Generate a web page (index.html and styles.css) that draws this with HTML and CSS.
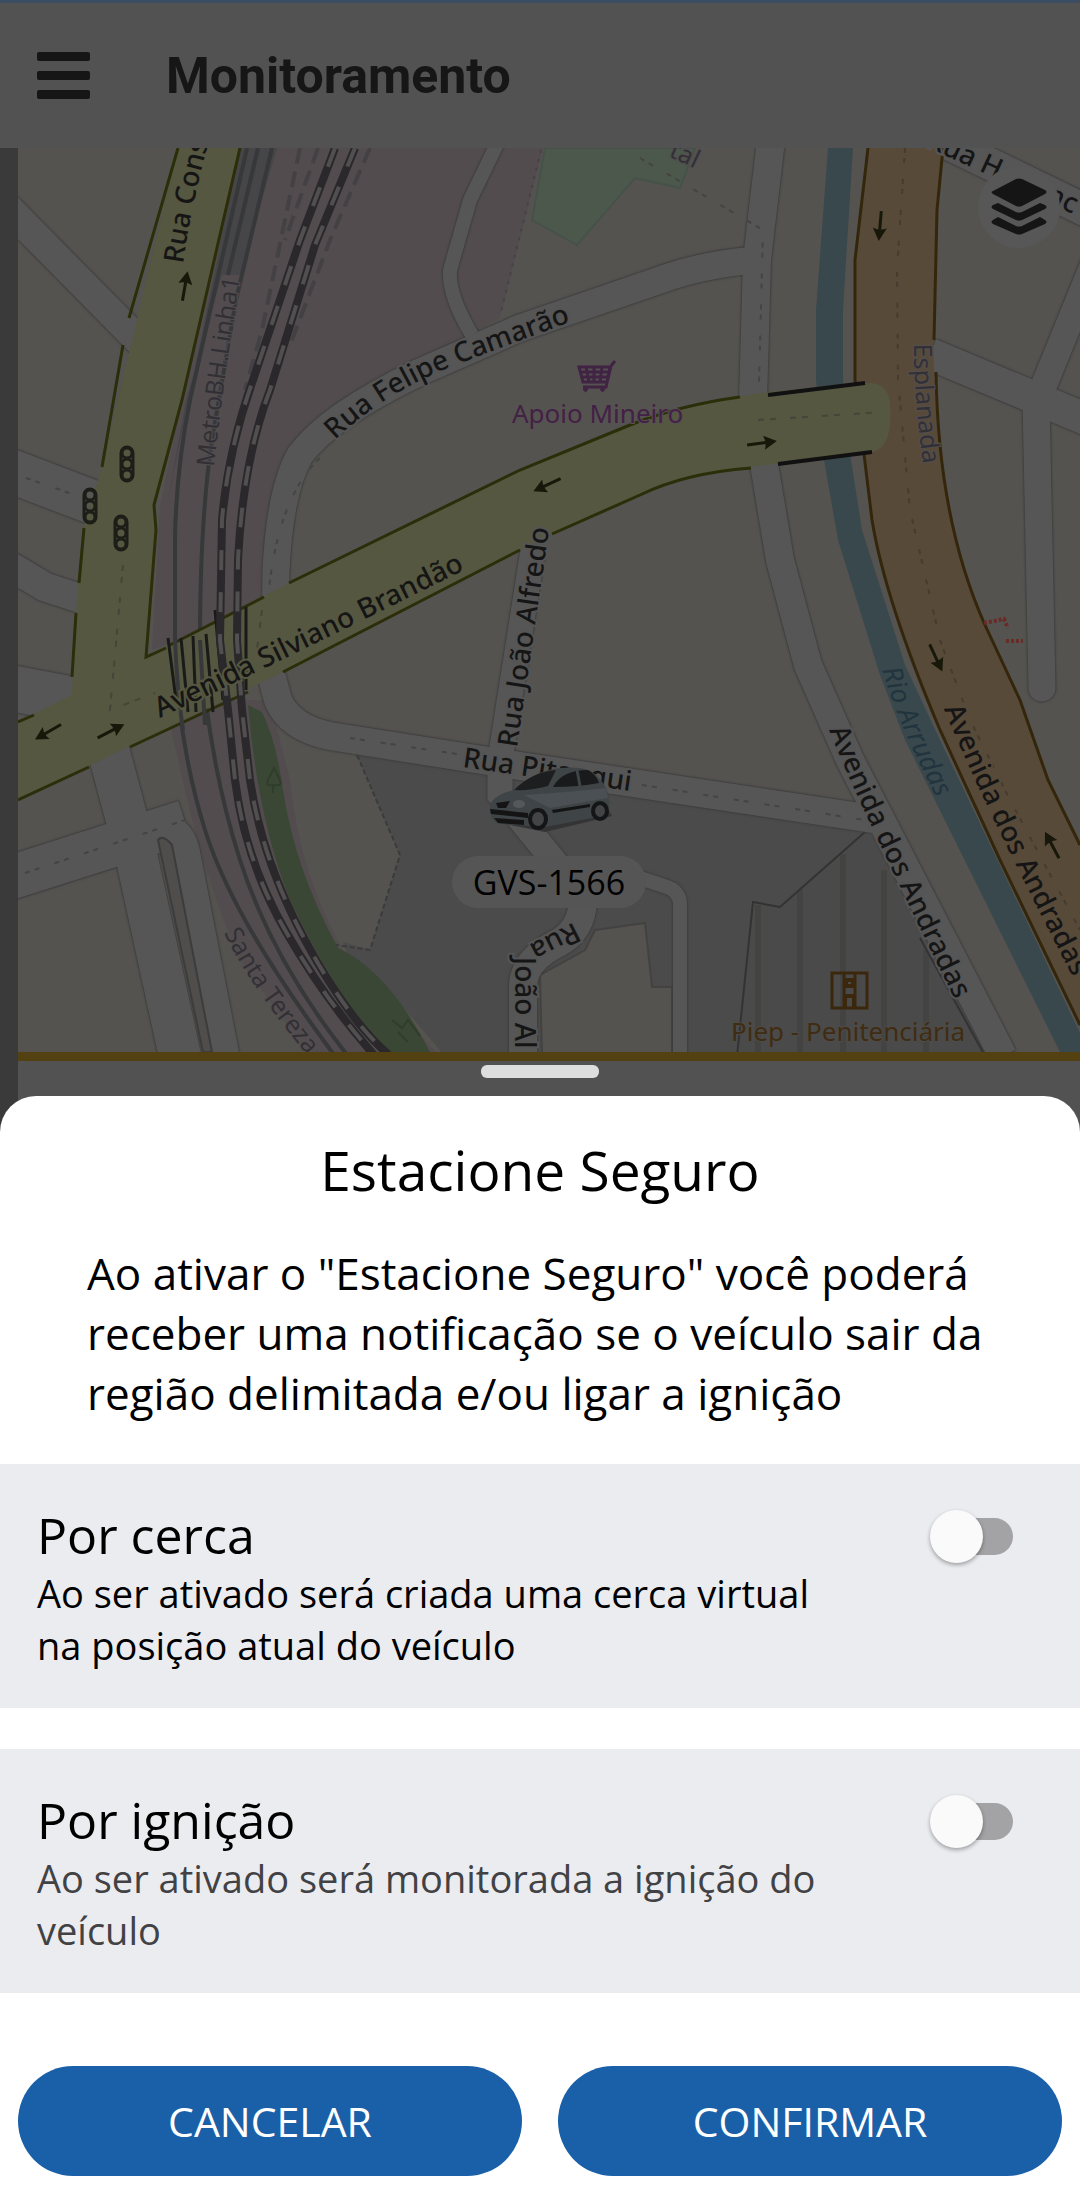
FILE: index.html
```html
<!DOCTYPE html>
<html lang="pt-BR">
<head>
<meta charset="utf-8">
<meta name="viewport" content="width=device-width, initial-scale=1">
<title>Monitoramento</title>
<link rel="stylesheet" href="styles.css">
</head>
<body>
<header class="topbar">
  <button class="menu-button" type="button" aria-label="Menu">
    <svg viewBox="0 0 53 47" width="53" height="47"><g fill="#161616"><rect width="53" height="9" rx="2"/><rect y="19" width="53" height="9" rx="2"/><rect y="38" width="53" height="9" rx="2"/></g></svg>
  </button>
  <h1 class="topbar-title">Monitoramento</h1>
</header>

<main class="map">
  <svg class="map-canvas" viewBox="18 148 1062 904" preserveAspectRatio="xMidYMid slice" role="img" aria-label="Mapa">
    <defs>
      <g id="arrow"><path d="M-15 0H4" stroke="#17180a" stroke-width="3"/><path d="M15 0L2 -7Q5 0 2 7Z" fill="#17180a"/></g>
      <g id="signal" fill="none" stroke="#1d1e17" stroke-width="3"><rect x="-6" y="-17" width="12" height="34" rx="6"/><circle r="5"/><circle cy="-11" r="5"/><circle cy="11" r="5"/></g>
      <path id="p-cons" d="M183 264Q192 200 212 130"/>
      <path id="p-metro" d="M214 467Q222 390 243 260"/>
      <path id="p-felipe" d="M335 440Q380 396 450 367Q510 344 590 315"/>
      <path id="p-silviano" d="M160 718Q280 662 480 562"/>
      <path id="p-joao" d="M517 748L552 510"/>
      <path id="p-pit" d="M462 767L650 794"/>
      <path id="p-andr1" d="M829 730Q860 808 965 1020"/>
      <path id="p-andr2" d="M944 709Q985 810 1090 1010"/>
      <path id="p-rio" d="M882 670Q905 745 965 850"/>
      <path id="p-santa" d="M224 933Q255 995 320 1070"/>
      <path id="p-rua2" d="M574 922L510 954"/>
      <path id="p-joao2" d="M515 957V1110"/>
      <path id="p-hon" d="M925 146L1110 231"/>
      <path id="p-espl" d="M914 344Q914 410 927 490"/>
      <g id="minor">
        <path d="M0 200L145 347" stroke-width="29"/>
        <path d="M0 467L100 505" stroke-width="44"/>
        <path d="M0 560L45 587L85 600" stroke-width="29"/>
        <path d="M0 686L85 702" stroke-width="46"/>
        <path d="M275 640L276 570Q280 490 300 455Q330 415 420 372L520 328L660 280Q700 265 755 260" stroke-width="27"/>
        <path d="M771 140L757 260L753 400L765 470L780 560L808 665L850 760L1003 1056" stroke-width="28"/>
        <path d="M262 640L278 700Q290 728 330 736L520 766L880 820" stroke-width="28"/>
        <path d="M533 550L500 760L500 795L582 895" stroke-width="25"/>
        <path d="M640 878L664 886Q680 890 680 905V1056" stroke-width="14"/>
        <path d="M583 900Q582 930 558 943Q524 960 523 985V1056" stroke-width="28"/>
        <path d="M499 140L470 200L450 270Q448 295 472 335" stroke-width="14"/>
        <path d="M920 130L1095 215" stroke-width="32"/>
        <path d="M930 354L1100 425" stroke-width="32"/>
        <path d="M1040 395L1095 260" stroke-width="26"/>
        <path d="M1036 400L1042 688" stroke-width="27" stroke-linecap="round"/>
        <path d="M0 881L185 822" stroke-width="44"/>
        <path d="M107 745L135 850L180 1056" stroke-width="42"/>
        <path d="M160 828Q180 826 186 850L226 1056" stroke-width="27"/>
      </g>
      <path id="rail1" d="M335 148L300 240L253 380Q228 450 222 520L220 640L228 710L235 780Q245 860 285 930T375 1056"/>
      <path id="rail2" d="M355 148L315 245L270 390Q243 460 238 560L237 640L242 710L250 780Q262 860 305 940T390 1056"/>
      <path id="ave" d="M18 722L72 695Q76 600 83 528L102 467L178 148H240L182 400L154 505L156 530L146 657L289 583L520 470L630 425Q680 405 768 392L870 383Q889 384 890 405Q894 450 868 453L750 467Q685 473 640 495L520 550L283 672L18 800Z"/>
    </defs>

    <rect x="18" y="148" width="1062" height="904" fill="#555350"/>
    <g fill="#524c4f">
      <path d="M238 148H543L500 318L470 335L345 400L290 445Q263 490 263 600L165 645L152 650L160 505L182 400Z"/>
      <path d="M170 725L185 790Q205 880 240 960L310 1056H440L350 962Q300 880 290 780L270 700L200 700Z"/>
    </g>
    <path d="M357 755L400 855L370 950L343 942L350 962L380 980L445 1056H990L870 832L500 772Z" fill="#4b4b4b"/>
    <path d="M357 755L400 855L370 950L318 942" fill="none" stroke="#3c3b3b" stroke-width="2" stroke-dasharray="5 3"/>
    <path d="M545 148L532 220L577 245L635 178L680 188L695 148Z" fill="#4c584c" stroke="#45524a" stroke-width="2"/>
    <path d="M541 150L500 316" stroke="#48404a" stroke-width="2" stroke-dasharray="3 6"/>
    <path d="M248 705L262 712Q276 740 283 790Q295 870 338 948Q390 972 432 1056H386Q330 985 290 900Q258 820 248 705Z" fill="#3a4735"/>
    <g fill="none" stroke="#2f3e2b" stroke-width="2"><path d="M273 793V785M273 785Q264 787 269 778L274 768L279 778Q284 787 273 785M392 1020l10 8 6-8 12 16m-22-4 10 10"/></g>
    <g fill="#555350" stroke="#434241" stroke-width="2">
      <path d="M595 930L645 923L652 987L672 987V1056H542L540 975L585 950Z"/>
    </g>
    <path d="M865 832L780 907L753 902L737 1056H988Z" fill="#4a4a4a"/>
    <g stroke="#434342" stroke-width="6"><path d="M758 905V1052M800 890V1052M843 854V1052M884 870V1052M926 950V1052"/></g>
    <path d="M865 832L780 907L753 902L737 1056M920 938L985 1056" fill="none" stroke="#333" stroke-width="2"/>

    <path d="M828 148H853L843 310V380L851 460L862 530L905 665L940 740L1080 1033V1052H1060L905 740L880 675L838 540L824 460L816 380V310Z" fill="#39484d"/>
    <use href="#minor" class="road-case"/>
    <g fill="none" stroke="#565656"><use href="#minor"/></g>
    <path class="road-edge" d="M158 840L203 1052L212 1052L172 845Q163 834 158 840Z"/>
    <g fill="none" stroke="#444" stroke-width="2" stroke-dasharray="5 5 5 16">
      <path d="M26 478L75 495M320 458Q275 500 267 610M350 738L470 756M642 785L865 820"/>
      <path d="M25 873L185 820M640 158L763 230L758 420M648 154"/>
    </g>

    <path d="M868 148H943L937 210L933 340L935 400Q940 520 985 625L1020 700L1048 780L1080 845V1025L1000 860L940 730Q885 600 872 520L855 380V260Z" fill="#584a39"/>
    <path d="M868 148L855 260V380L872 520Q885 600 940 730L1000 860L1080 1025M943 148L937 210L934 340M936 372Q938 520 985 625L1020 700L1048 780L1080 845" fill="none" stroke="#34260b" stroke-width="3"/>
    <path d="M905 148L897 270L898 380L910 510L940 640L970 720L1010 800L1080 930" fill="none" stroke="#453c30" stroke-width="2" stroke-dasharray="5 5 5 16"/>

    <path d="M240 148H277L240 275H222L186 400L168 500" fill="#464547"/>
    <g fill="none" stroke="#37383a" stroke-width="4">
      <path d="M247 148L190 400Q176 470 175 540V640Q177 740 205 830T335 1056"/>
      <path d="M272 148L236 300L212 440Q200 520 200 640Q208 760 240 860T348 1056"/>
      <path d="M258 148L228 275"/>
    </g>
    <use href="#ave" fill="#555740"/>
    <g fill="none" stroke="#2c2e0a" stroke-width="3">
      <path d="M178 148L129 318M123 345L102 467M84 528L79 583M76 613L72 677M240 148L182 400L154 505L156 530L146 657L166 648M170 645L264 597M289 583L520 470L630 425Q680 405 740 397M18 722L34 715M751 468Q685 473 640 495L552 534M520 550L283 672M248 692L130 747M89 767L18 800"/>
    </g>
    <path d="M768 395L865 383M778 464L872 452" stroke="#111" stroke-width="4"/>
    <path d="M123 565L110 710L155 693M262 610L257 650M758 420L885 412" fill="none" stroke="#44463a" stroke-width="2" stroke-dasharray="6 6 6 14"/>
    <g fill="none" stroke="#37383a" stroke-width="4"><path d="M175 640Q177 690 183 730M200 640L205 725"/></g>
    <g fill="none" stroke="#1a1a18" stroke-width="3"><path d="M168 638L176 700M181 638L188 712M193 636L196 712M206 634L213 712M215 610L223 700M246 607V690"/></g>
    <g fill="none" stroke="#444144" stroke-width="4" stroke-dasharray="16 8"><path d="M300 148L262 330L245 390M318 148L285 240M370 148L330 240L290 345"/></g>
    <g fill="none" stroke="#2a282a" stroke-width="8"><use href="#rail1"/><use href="#rail2"/></g>
    <g fill="none" stroke="#524f51" stroke-width="4" stroke-dasharray="20 22"><use href="#rail1"/><use href="#rail2"/></g>

    <use href="#arrow" transform="translate(185 286) rotate(-80)"/>
    <use href="#arrow" transform="translate(48 732) rotate(150)"/>
    <use href="#arrow" transform="translate(111 731) rotate(-27)"/>
    <use href="#arrow" transform="translate(547 485) rotate(155)"/>
    <use href="#arrow" transform="translate(762 443) rotate(-8)"/>
    <use href="#arrow" transform="translate(880 226) rotate(95)"/>
    <use href="#arrow" transform="translate(936 658) rotate(65)"/>
    <use href="#arrow" transform="translate(1052 845) rotate(-118)"/>
    <use href="#signal" x="127" y="464"/>
    <use href="#signal" x="90" y="506"/>
    <use href="#signal" x="121" y="533"/>

    <g class="label">
      <text class="on-main"><textPath href="#p-cons">Rua Cons</textPath></text>
      <text class="soft"><textPath href="#p-metro">MetroBH.Linha1</textPath></text>
      <text><textPath href="#p-felipe">Rua Felipe Camarão</textPath></text>
      <text class="on-main"><textPath href="#p-silviano">Avenida Silviano Brandão</textPath></text>
      <text><textPath href="#p-joao">Rua João Alfredo</textPath></text>
      <text><textPath href="#p-pit">Rua Pitangui</textPath></text>
      <text><textPath href="#p-andr1">Avenida dos Andradas</textPath></text>
      <text class="on-trunk"><textPath href="#p-andr2">Avenida dos Andradas</textPath></text>
      <text class="river"><textPath href="#p-rio">Rio Arrudas</textPath></text>
      <text class="soft"><textPath href="#p-santa">Santa Tereza</textPath></text>
      <text><textPath href="#p-rua2">Rua</textPath></text>
      <text><textPath href="#p-joao2">João Al</textPath></text>
      <text><textPath href="#p-hon">Rua Honônc</textPath></text>
      <text class="soft"><textPath href="#p-espl">Esplanada</textPath></text>
      <text class="soft" transform="translate(668 156) rotate(25)">tal</text>
      <text class="shop" x="512" y="423">Apoio Mineiro</text>
      <text class="prison" x="731" y="1041">Piep - Penitenciária</text>
    </g>
    <g fill="none" stroke="#412343" stroke-width="3"><path d="M579 367H610L607 382H583ZM615 361L611 366L606 387H583M586 367L589 382M594 367V382M602 367L600 382M581 372H609M582 377H608"/><path d="M587 391l-3-3M604 391l-3-3" stroke-width="4"/></g>
    <g fill="none" stroke="#3b270c" stroke-width="3"><path d="M832 973H867V1008H832ZM844 973V1008M855 973V1008"/><path d="M846 986h7v-6h-7zM845 1008v-12h9v12" stroke-width="4"/></g>
    <g fill="none" stroke="#6a2a25" stroke-width="4" stroke-dasharray="3 2"><path d="M984 623L1004 619L1008 628M1006 641H1023"/></g>

    <g>
      <path d="M496 822L545 832L612 816L606 806Z" fill="#343434"/>
      <path d="M490 808Q490 796 514 790Q536 770 560 768Q588 765 598 777Q611 790 609 806Q604 818 592 818L545 827L500 824Q489 820 490 808Z" fill="#3f4447"/>
      <path d="M524 795Q570 792 606 788L608 798L550 808Z" fill="#4a5054"/>
      <path d="M514 790Q532 772 556 770L548 786Q530 791 514 790Z" fill="#1d1e20"/>
      <path d="M553 787Q562 770 588 770Q596 774 599 783Q578 787 553 787Z" fill="#191a1b"/>
      <path d="M577 770L580 786" stroke="#3f4447" stroke-width="3"/>
      <path d="M496 803L510 801L506 808L498 808ZM490 809L528 813V818L491 814ZM494 818L524 820V825L498 823ZM552 810L590 804V807L553 813Z" fill="#141414"/>
      <ellipse cx="519" cy="804" rx="6" ry="4" fill="#54585a"/>
      <g fill="#424445" stroke="#141516" stroke-width="4"><ellipse cx="538" cy="819" rx="8" ry="9"/><ellipse cx="600" cy="811" rx="7" ry="8"/></g>
    </g>
    <rect x="452" y="856" width="194" height="52" rx="26" fill="#555"/>
    <text class="plate" x="549" y="895">GVS-1566</text>
  </svg>
  <button class="layers-button" type="button" aria-label="Camadas do mapa">
    <svg viewBox="0 0 56 58" width="56" height="58" fill="#151515"><path d="M2 13L25 1Q28 0 31 1L54 12Q57 14 54 16L31 28Q28 29 25 28L2 16Q-1 14 2 13Z"/><path d="M2 27L7 25L25 34Q28 35 31 34L49 25L54 27Q57 29 54 31L31 42Q28 43 25 42L2 31Q-1 29 2 27Z"/><path d="M2 42L7 39L25 48Q28 49 31 48L49 39L54 42Q57 44 54 46L31 56Q28 57 25 56L2 46Q-1 44 2 42Z"/></svg>
  </button>
</main>

<div class="sheet-wrap">
  <div class="handle"></div>
  <section class="sheet" aria-labelledby="sheet-title">
    <h2 class="sheet-title" id="sheet-title">Estacione Seguro</h2>
    <p class="sheet-intro">Ao ativar o "Estacione Seguro" você poderá receber uma notificação se o veículo sair da região delimitada e/ou ligar a ignição</p>
    <form class="sheet-form">
      <div class="options">
        <div class="option">
          <label class="option-text" for="fence"><span class="option-name">Por cerca</span><span class="option-note">Ao ser ativado será criada uma cerca virtual na posição atual do veículo</span></label>
          <input class="switch" type="checkbox" role="switch" id="fence">
        </div>
        <div class="option">
          <label class="option-text" for="ignition"><span class="option-name">Por ignição</span><span class="option-note muted">Ao ser ativado será monitorada a ignição do veículo</span></label>
          <input class="switch" type="checkbox" role="switch" id="ignition">
        </div>
      </div>
      <div class="actions">
        <button class="action" type="button">CANCELAR</button>
        <button class="action" type="button">CONFIRMAR</button>
      </div>
    </form>
  </section>
</div>
</body>
</html>
```
FILE: styles.css
```css
* { box-sizing: border-box; }

body {
  margin: 0;
  min-height: 100vh;
  display: flex;
  flex-direction: column;
  background: linear-gradient(90deg, #3a3a3a 18px, #525252 18px);
  font-family: "Open Sans", "Noto Sans", sans-serif;
  color: #000;
}

h1, h2, p { margin: 0; font-weight: 400; }
button { border: 0; padding: 0; font: inherit; cursor: pointer; }
svg { display: block; }

.topbar {
  display: flex;
  align-items: center;
  gap: 76px;
  height: 148px;
  padding: 0 37px;
  border-top: 3px solid #3a4d63;
  background: #525252;
}
.menu-button { background: none; }
.topbar-title {
  font: 700 50px/60px Roboto, sans-serif;
  color: #161616;
}

.map {
  position: relative;
  margin-left: 18px;
  border-bottom: 9px solid #544112;
}
.map-canvas { width: 100%; height: auto; }
.road-case { fill: none; stroke: #444; filter: drop-shadow(0 0 1px #333) drop-shadow(0 0 1px #444); }
.road-edge { fill: #4f4e4c; stroke: #3c3c3c; stroke-width: 2; }
.label text {
  font: 500 28px "Noto Sans", sans-serif;
  fill: #151515;
  stroke: #555;
  stroke-width: 4px;
  paint-order: stroke;
}
.label .on-main { stroke: #555740; }
.label .on-trunk { stroke: #584a39; }
.label .soft { font-size: 25px; font-weight: 400; fill: #323035; stroke: #524e50; stroke-width: 2px; }
.label .river { font-size: 27px; font-weight: 400; font-style: italic; fill: #22343e; stroke: none; }
.label .shop { font-size: 26px; font-weight: 400; fill: #432045; stroke: #555350; stroke-width: 2px; }
.label .prison { font-size: 26px; font-weight: 400; fill: #3f2c13; stroke: #4d4b48; stroke-width: 2px; }
.plate { font: 34px "Open Sans", sans-serif; text-anchor: middle; fill: #000; }

.layers-button {
  position: absolute;
  top: 18px;
  right: 20px;
  display: grid;
  place-items: center;
  width: 82px;
  height: 82px;
  border-radius: 50%;
  background: #575757;
}

.sheet-wrap { flex: 1; display: flex; flex-direction: column; }
.handle {
  width: 118px;
  height: 13px;
  margin: 4px auto 18px;
  border-radius: 6px;
  background: #dedede;
}
.sheet {
  flex: 1;
  padding-top: 37px;
  border-radius: 36px 36px 0 0;
  background: #fff;
}
.sheet-title { font-size: 55px; line-height: 74px; text-align: center; }
.sheet-intro {
  padding: 36px 87px 41px;
  font-size: 44px;
  line-height: 60px;
}
.options { display: grid; gap: 41px; }
.option {
  display: flex;
  justify-content: space-between;
  gap: 100px;
  padding: 41px 67px 37px 37px;
  background: #ebecf0;
}
.option-text { flex: 1; display: grid; gap: 2px; }
.option-name { font-size: 50px; line-height: 60px; }
.option-note { font-size: 38px; line-height: 52px; }
.muted { color: #424245; }

.switch {
  appearance: none;
  position: relative;
  flex: none;
  width: 76px;
  height: 37px;
  margin: 13px 0 0;
  border-radius: 19px;
  background: #a3a3a5;
}
.switch::before {
  content: "";
  position: absolute;
  left: -7px;
  top: -8px;
  width: 53px;
  height: 53px;
  border-radius: 50%;
  background: #fafafa;
  box-shadow: 0 2px 4px #0005;
}
.switch:checked::before { left: 30px; }

.actions {
  display: grid;
  grid-template-columns: 1fr 1fr;
  gap: 36px;
  padding: 73px 18px 19px;
}
.action {
  height: 110px;
  border-radius: 55px;
  background: #1a60a9;
  color: #fff;
  font-size: 41px;
}
```
